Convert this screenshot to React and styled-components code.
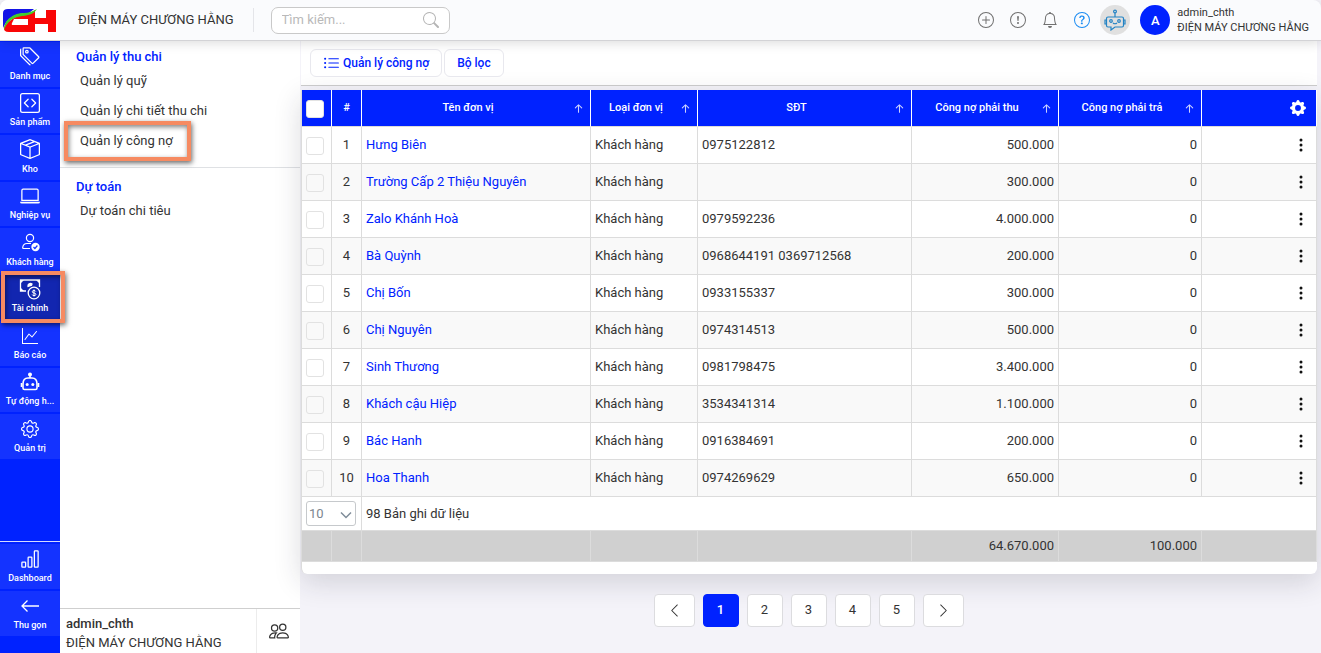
import React, { useState } from 'react';
import styled, { createGlobalStyle, css } from 'styled-components';
import {
  BsTags,
  BsCodeSquare,
  BsBoxSeam,
  BsLaptop,
  BsGraphUp,
  BsGear,
  BsBarChart,
  BsThreeDotsVertical,
  BsGearFill,
  BsPeople,
  BsChevronLeft,
  BsChevronRight,
  BsListUl,
  BsBell,
  BsPlusCircle,
  BsExclamationCircle,
  BsQuestionCircle,
  BsSearch,
  BsArrowUpShort,
} from 'react-icons/bs';

const blue = '#0022ff';
const line = '#dcdcdc';

const GlobalStyle = createGlobalStyle`
  * { box-sizing: border-box; }
  body {
    margin: 0;
    background: #f4f3f9;
    color: #333;
    font-family: Roboto, "Liberation Sans", sans-serif;
    font-size: 13px;
    line-height: 20px;
  }
  button, input, select { font: inherit; color: inherit; }
  button { cursor: pointer; }
  a { color: inherit; text-decoration: none; }
  ul { list-style: none; margin: 0; padding: 0; }
`;

const Page = styled.div`
  display: flex;
  flex-direction: column;
  height: 100vh;
  overflow: hidden;
`;

const Header = styled.header`
  display: flex;
  align-items: center;
  flex: none;
  height: 41px;
  padding-right: 12px;
  background: #fafbfd;
  border-bottom: 1px solid #d3d3d6;
  border-radius: 8px 8px 0 0;
  box-shadow: 0 2px 12px rgba(0, 0, 0, 0.14);
  position: relative;
  z-index: 3;
`;

const LogoLink = styled.a`
  display: flex;
  width: 60px;
  height: 40px;
  background: #fff;
  border-radius: 8px 0 0 0;
`;

const Company = styled.div`
  margin-left: 18px;
  padding-right: 19px;
  line-height: 24px;
  border-right: 1px solid #e4e5e9;
`;

const Search = styled.label`
  display: flex;
  align-items: center;
  width: 179px;
  height: 27px;
  margin-left: 17px;
  padding: 0 10px;
  background: #fff;
  border: 1px solid #c9c9c9;
  border-radius: 7px;
  color: #b5b5b5;

  input {
    flex: 1;
    min-width: 0;
    padding: 0;
    border: 0;
    outline: 0;
    background: none;
  }
  input::placeholder { color: #b9b9b9; opacity: 1; }
`;

const HeaderTools = styled.div`
  display: flex;
  align-items: center;
  gap: 16px;
  margin-left: auto;
`;

const IconButton = styled.button`
  display: flex;
  padding: 0;
  border: 0;
  background: none;
  color: ${p => p.$color || '#707070'};
`;

const BotButton = styled(IconButton)`
  align-items: center;
  justify-content: center;
  width: 30px;
  height: 30px;
  margin-left: -6px;
  border-radius: 50%;
  background: #e0e0e0;
`;

const Account = styled.div`
  display: flex;
  align-items: center;
  gap: 7px;
  margin-left: -6px;
  font-size: 11px;
  line-height: 15px;
`;

const Avatar = styled.span`
  display: flex;
  align-items: center;
  justify-content: center;
  width: 30px;
  height: 30px;
  border-radius: 50%;
  background: ${blue};
  color: #fff;
  font-size: 13px;
  font-weight: 500;
`;

const Body = styled.div`
  display: flex;
  flex: 1;
  min-height: 0;
`;

const Sidebar = styled.nav`
  display: flex;
  flex-direction: column;
  justify-content: space-between;
  width: 60px;
  background: ${blue};
  position: relative;
  z-index: 2;
`;

const MainMenu = styled.ul`
  display: grid;
  grid-auto-rows: 1fr;
  gap: 2px;
  height: 418px;
  padding-top: 1px;
`;

const BottomMenu = styled.ul`
  display: grid;
  grid-auto-rows: 45px;
  gap: 2px;
  padding: 2px 0 17px;
  border-top: 1px solid #d5dbff;
`;

const MenuItem = styled.li`
  position: relative;
`;

const MenuLink = styled.a`
  display: flex;
  flex-direction: column;
  align-items: center;
  height: 100%;
  padding: 3px 0;
  background: ${p => (p.$active ? '#1226b0' : '#1433ff')};
  color: #fff;
  font-size: 9px;
  font-weight: 500;
  line-height: 16px;
  white-space: nowrap;

  svg { flex: none; margin: auto; }
`;

const highlight = css`
  position: absolute;
  border: 4px solid #f68a61;
  box-shadow: 1px 2px 5px rgba(0, 0, 0, 0.6), inset 1px 2px 5px rgba(0, 0, 0, 0.5);
  pointer-events: none;
`;

const MenuHighlight = styled.span`
  ${highlight}
  inset: -4px -5px -4px 1px;
  z-index: 1;
`;

const Submenu = styled.aside`
  display: flex;
  flex-direction: column;
  width: 240px;
  background: #fff;
`;

const SubSection = styled.section`
  padding: 6px 16px 10px;

  & + & {
    padding-top: 9px;
    border-top: 1px solid #dfe1e4;
  }
  h2 {
    margin: 0;
    color: ${blue};
    font-size: 13px;
    font-weight: 500;
    line-height: 20px;
  }
  ul {
    display: grid;
    gap: 10px;
    padding: 4px 4px 6px;
  }
  li { position: relative; }
`;

const SubHighlight = styled.span`
  ${highlight}
  inset: -10px 89px -10px -16px;
`;

const SubFooter = styled.footer`
  display: flex;
  margin-top: auto;
  height: 45px;
  border-top: 1px solid #cfcfcf;

  div {
    flex: 1;
    padding: 5px 6px 0;
    line-height: 19px;
    white-space: nowrap;
  }
  strong { display: block; font-weight: 500; }
  button {
    justify-content: center;
    align-items: center;
    width: 44px;
    border-left: 1px solid #ececec;
  }
`;

const Main = styled.main`
  flex: 1;
  min-width: 0;
  margin: 0 4px 0 1px;
  position: relative;
  z-index: 1;
`;

const Toolbar = styled.div`
  display: flex;
  gap: 2px;
  padding: 8px 8px 8px 9px;
  height: 45px;
  background: #fff;
  border-bottom: 1px solid #cdcdcd;
`;

const ToolButton = styled.button`
  display: flex;
  align-items: center;
  gap: 3px;
  padding: 0 12px;
  height: 28px;
  background: #fff;
  border: 1px solid #e8e8ee;
  border-radius: 6px;
  color: ${blue};
  font-size: 12px;
  font-weight: 500;
`;

const Card = styled.div`
  margin-top: 4px;
  padding-bottom: 12px;
  background: #fff;
  border-left: 1px solid ${line};
  border-radius: 0 0 6px 6px;
  box-shadow: 0 8px 28px rgba(30, 30, 50, 0.16);
`;

const Table = styled.table`
  width: 100%;
  table-layout: fixed;
  border-collapse: separate;
  border-spacing: 0;

  th, td {
    height: 37px;
    padding: 0 4px;
    border-right: 1px solid ${line};
    border-bottom: 1px solid ${line};
    font-weight: 400;
    text-align: left;
  }
  thead th {
    background: ${blue};
    border-right-color: #fff;
    color: #fff;
    font-size: 11px;
    font-weight: 500;
    text-align: center;
  }
  tbody tr:nth-child(even) { background: #f9f9f9; }
  tbody a { color: ${blue}; }
`;

const Col = styled.col`
  width: ${p => p.$width};
`;

const NumberCell = styled.td`
  && { text-align: ${p => (p.$center ? 'center' : 'right')}; }
`;

const HeadLabel = styled.div`
  display: flex;
  align-items: center;

  span { flex: 1; }
  svg { flex: none; margin-right: -1px; }
`;

const ActionCell = styled.td`
  button { margin-left: auto; padding-right: 3px; }
  thead & button { padding-right: 6px; }
`;

const Check = styled.input.attrs({ type: 'checkbox' })`
  display: block;
  appearance: none;
  width: 18px;
  height: 18px;
  margin: 2px 0 0;
  background: ${p => (p.$plain ? 'transparent' : '#fff')};
  border: 1px solid #e2e2e2;
  border-radius: 3px;

  &:checked { background: #7d90ff; }
`;

const CountRow = styled.tr`
  && td { height: 34px; }
  && td:first-child { padding-right: 0; }
`;

const TotalRow = styled.tr`
  && td { height: 31px; background: #d0d0d0; }
`;

const PageSize = styled.label`
  display: flex;
  align-items: center;
  width: 50px;
  height: 25px;
  border: 1px solid #c6c9cc;
  border-radius: 3px;
  color: #7c868f;
  position: relative;

  select {
    width: 100%;
    height: 100%;
    padding: 0 2px;
    appearance: none;
    border: 0;
    background: none;
  }
  svg { position: absolute; right: 3px; top: 9px; pointer-events: none; }
`;

const Pager = styled.nav`
  display: flex;
  justify-content: center;
  gap: 8px;
  padding-top: 20px;
`;

const PageButton = styled.button`
  display: flex;
  align-items: center;
  justify-content: center;
  width: ${p => (p.$wide ? '41px' : '36px')};
  height: 33px;
  padding: 0 1px 1px 0;
  background: ${p => (p.$active ? blue : '#fff')};
  border: 1px solid ${p => (p.$active ? blue : '#dcdcdf')};
  border-radius: 4px;
  color: ${p => (p.$active ? '#fff' : '#333')};
  font-weight: ${p => (p.$active ? 500 : 400)};
`;

const Logo = () => (
  <svg width="60" height="40" viewBox="0 0 60 40" aria-label="CH">
    <path d="M3 28V13q0-4 5-4h26l-5 4q-11 0-17 4-6 4-9 11z" fill="#1414e6" />
    <path d="M11 18q7-3 14-3 6-1 10-5v8h11v-8h10v22h-8v-8H35v8H9q-6 0-5-5 2-6 7-9z" fill="#f90606" />
    <path d="M14 19h14v6H13q-2 0-1-2z" fill="#fff" />
    <path d="M4 29q1-8 8-12 5-3 12-3-10 3-13 6-5 3-7 9z" fill="#fff" />
    <path d="M4 30q0-9 7-13 5-4 13-4 6 0 13-4-3 5-9 6-3 1-6 1-7 1-11 4-5 4-7 10z" fill="#3fce2a" />
  </svg>
);

const CustomerIcon = () => (
  <svg width="20" height="20" viewBox="0 0 20 20" fill="none" stroke="#fff" strokeWidth="1.2">
    <circle cx="10" cy="6" r="3.6" />
    <path d="M11 11.500H7q-4 0-4.300 4.300 0 .7.7.7H10" />
    <circle cx="15.500" cy="15" r="4.200" fill="#fff" stroke="none" />
    <path d="m13.500 15 1.400 1.500 2.500-3" stroke="#1433ff" />
  </svg>
);

const MoneyIcon = () => (
  <svg width="22" height="22" viewBox="0 0 22 22" fill="none" stroke="#fff" strokeWidth="1.300">
    <path d="M7 13H1.500V2h19v7" />
    <path d="M1.500 2H5L1.500 5.500zM20.500 2H17l3.500 3.500zM1.500 13V9.500L5 13z" fill="#fff" stroke="none" />
    <path d="M9 8.500a2.500 2.500 0 0 1 4-2.500l-.500 1.200z" fill="#fff" />
    <circle cx="15" cy="15" r="5.800" />
    <path d="M16.800 13.500q-.5-1-1.800-1-1.700 0-1.700 1.200t1.700 1.300q1.900.2 1.900 1.400t-1.900 1.200q-1.500 0-1.900-1.100M15 11.500v7" strokeWidth="1" />
  </svg>
);

const RobotIcon = () => (
  <svg width="20" height="20" viewBox="0 0 20 20" fill="none" stroke="#fff" strokeWidth="1.600">
    <path d="M3 12q0-6 5-6h4q5 0 5 6v4q0 1.500-1.500 1.500h-11Q3 17.500 3 16zM10 6V3" />
    <path d="M1.500 11v4M18.500 11v4" />
    <circle cx="10" cy="2.500" r="1.200" fill="#fff" />
    <circle cx="7.200" cy="12.500" r="1.500" fill="#fff" stroke="none" />
    <circle cx="12.800" cy="12.500" r="1.500" fill="#fff" stroke="none" />
  </svg>
);

const ArrowIcon = () => (
  <svg width="20" height="20" viewBox="0 0 20 20" fill="none" stroke="#fff" strokeWidth="1.300">
    <path d="M19 10H2M7.500 4.500 2 10l5.500 5.500" />
  </svg>
);

const ChatBotIcon = () => (
  <svg width="22" height="22" viewBox="0 0 22 22" fill="none" stroke="#2383c4" strokeWidth="1.200">
    <circle cx="11" cy="2.500" r="1.400" />
    <path d="M11 4v4M4 8h14q1.500 0 1.500 1.500v7q0 1.500-1.500 1.500h-7l-4 3v-3H4q-1.500 0-1.500-1.500v-7Q2.500 8 4 8z" />
    <path d="M2.500 11H1v4h1.500M19.500 11H21v4h-1.500M9 14q2 1.500 4 0" />
    <circle cx="7" cy="12" r="1.300" />
    <circle cx="15" cy="12" r="1.300" />
  </svg>
);

const menu = [
  { label: 'Danh mục', icon: <BsTags size={20} /> },
  { label: 'Sản phẩm', icon: <BsCodeSquare size={20} /> },
  { label: 'Kho', icon: <BsBoxSeam size={20} /> },
  { label: 'Nghiệp vụ', icon: <BsLaptop size={20} /> },
  { label: 'Khách hàng', icon: <CustomerIcon /> },
  { label: 'Tài chính', icon: <MoneyIcon />, active: true },
  { label: 'Báo cáo', icon: <BsGraphUp size={16} /> },
  { label: 'Tự động h...', icon: <RobotIcon /> },
  { label: 'Quản trị', icon: <BsGear size={18} /> },
];

const bottomMenu = [
  { label: 'Dashboard', icon: <BsBarChart size={20} /> },
  { label: 'Thu gọn', icon: <ArrowIcon /> },
];

const columns = [
  { label: 'Tên đơn vị', width: 'auto' },
  { label: 'Loại đơn vị', width: '107px' },
  { label: 'SĐT', width: '214px' },
  { label: 'Công nợ phải thu', width: '147px' },
  { label: 'Công nợ phải trả', width: '143px' },
];

const rows = [
  ['Hưng Biên', '0975122812', '500.000'],
  ['Trường Cấp 2 Thiệu Nguyên', '', '300.000'],
  ['Zalo Khánh Hoà', '0979592236', '4.000.000'],
  ['Bà Quỳnh', '0968644191 0369712568', '200.000'],
  ['Chị Bốn', '0933155337', '300.000'],
  ['Chị Nguyên', '0974314513', '500.000'],
  ['Sinh Thương', '0981798475', '3.400.000'],
  ['Khách cậu Hiệp', '3534341314', '1.100.000'],
  ['Bác Hanh', '0916384691', '200.000'],
  ['Hoa Thanh', '0974269629', '650.000'],
];

const renderMenu = item => (
  <MenuItem key={item.label}>
    <MenuLink href="#" $active={item.active}>
      {item.icon}
      <span>{item.label}</span>
    </MenuLink>
    {item.active && <MenuHighlight />}
  </MenuItem>
);

const DebtTable = () => (
  <Table>
    <colgroup>
      <Col $width="30px" />
      <Col $width="30px" />
      {columns.map(col => <Col key={col.label} $width={col.width} />)}
      <Col $width="115px" />
    </colgroup>
    <thead>
      <tr>
        <th><Check aria-label="Chọn tất cả" /></th>
        <th>#</th>
        {columns.map(col => (
          <th key={col.label}>
            <HeadLabel>
              <span>{col.label}</span>
              <BsArrowUpShort size={17} opacity={0.8} />
            </HeadLabel>
          </th>
        ))}
        <ActionCell as="th">
          <IconButton $color="#fff" aria-label="Cài đặt cột">
            <BsGearFill size={16} />
          </IconButton>
        </ActionCell>
      </tr>
    </thead>
    <tbody>
      {rows.map(([name, phone, debt], i) => (
        <tr key={name}>
          <td><Check $plain aria-label={`Chọn ${name}`} /></td>
          <NumberCell $center>{i + 1}</NumberCell>
          <td><a href="#">{name}</a></td>
          <td>Khách hàng</td>
          <td>{phone}</td>
          <NumberCell>{debt}</NumberCell>
          <NumberCell>0</NumberCell>
          <ActionCell>
            <IconButton $color="#111" aria-label="Thao tác">
              <BsThreeDotsVertical size={16} />
            </IconButton>
          </ActionCell>
        </tr>
      ))}
    </tbody>
    <tfoot>
      <CountRow>
        <td colSpan={2}>
          <PageSize>
            <select aria-label="Số dòng" defaultValue="10">
              <option>10</option>
              <option>20</option>
              <option>50</option>
            </select>
            <svg width="12" height="8" viewBox="0 0 12 8" fill="none" stroke="#7f8c99" strokeWidth="1.500">
              <path d="m1 1.500 5 5 5-5" />
            </svg>
          </PageSize>
        </td>
        <td colSpan={6}>98 Bản ghi dữ liệu</td>
      </CountRow>
      <TotalRow>
        <td /><td /><td /><td /><td />
        <NumberCell>64.670.000</NumberCell>
        <NumberCell>100.000</NumberCell>
        <td />
      </TotalRow>
    </tfoot>
  </Table>
);

const App = () => {
  const [page, setPage] = useState(1);

  return (
    <Page>
      <GlobalStyle />
      <Header>
        <LogoLink href="#"><Logo /></LogoLink>
        <Company>ĐIỆN MÁY CHƯƠNG HẰNG</Company>
        <Search>
          <input type="text" placeholder="Tìm kiếm..." aria-label="Tìm kiếm" />
          <BsSearch size={16} />
        </Search>
        <HeaderTools>
          <IconButton aria-label="Thêm"><BsPlusCircle size={16} /></IconButton>
          <IconButton aria-label="Cảnh báo"><BsExclamationCircle size={16} /></IconButton>
          <IconButton aria-label="Thông báo"><BsBell size={16} /></IconButton>
          <IconButton aria-label="Trợ giúp" $color="#1b8cf2"><BsQuestionCircle size={16} /></IconButton>
          <BotButton aria-label="Trợ lý"><ChatBotIcon /></BotButton>
          <Account>
            <Avatar>A</Avatar>
            <div>
              <div>admin_chth</div>
              <div>ĐIỆN MÁY CHƯƠNG HẰNG</div>
            </div>
          </Account>
        </HeaderTools>
      </Header>
      <Body>
        <Sidebar>
          <MainMenu>{menu.map(renderMenu)}</MainMenu>
          <BottomMenu>{bottomMenu.map(renderMenu)}</BottomMenu>
        </Sidebar>
        <Submenu>
          <SubSection>
            <h2>Quản lý thu chi</h2>
            <ul>
              <li><a href="#">Quản lý quỹ</a></li>
              <li><a href="#">Quản lý chi tiết thu chi</a></li>
              <li>
                <a href="#">Quản lý công nợ</a>
                <SubHighlight />
              </li>
            </ul>
          </SubSection>
          <SubSection>
            <h2>Dự toán</h2>
            <ul>
              <li><a href="#">Dự toán chi tiêu</a></li>
            </ul>
          </SubSection>
          <SubFooter>
            <div>
              <strong>admin_chth</strong>
              ĐIỆN MÁY CHƯƠNG HẰNG
            </div>
            <IconButton $color="#333" aria-label="Người dùng"><BsPeople size={20} /></IconButton>
          </SubFooter>
        </Submenu>
        <Main>
          <Toolbar>
            <ToolButton><BsListUl size={17} />Quản lý công nợ</ToolButton>
            <ToolButton>Bộ lọc</ToolButton>
          </Toolbar>
          <Card><DebtTable /></Card>
          <Pager>
            <PageButton $wide aria-label="Trang trước"><BsChevronLeft size={15} /></PageButton>
            {[1, 2, 3, 4, 5].map(n => (
              <PageButton key={n} $active={n === page} onClick={() => setPage(n)}>{n}</PageButton>
            ))}
            <PageButton $wide aria-label="Trang sau"><BsChevronRight size={15} /></PageButton>
          </Pager>
        </Main>
      </Body>
    </Page>
  );
};

export default App;
